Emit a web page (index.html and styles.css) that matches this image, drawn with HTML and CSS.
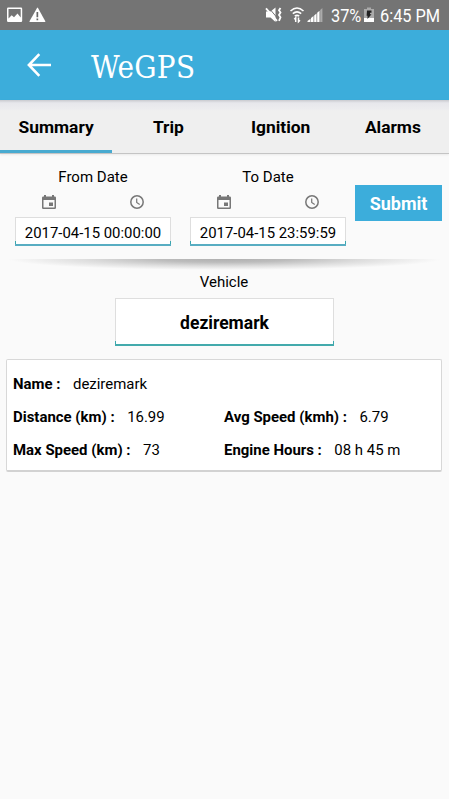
FILE: index.html
```html
<!DOCTYPE html>
<html lang="en">
<head>
<meta charset="utf-8">
<title>WeGPS</title>
<link rel="stylesheet" href="styles.css">
</head>
<body>
<div class="status">
  <svg class="notices" viewBox="0 0 46 30" aria-hidden="true">
    <path fill="#fff" fill-rule="evenodd" d="M2 7.500h12q1.200 0 1.200 1.200v12q0 1.300-1.200 1.300H1.200Q0 22 0 20.700V8.700Q0 7.500 1.200 7.500zM1.500 9v9.500l3.200-3.300 2.300 2 3.500-3.700 3.200 4V9z"/>
    <path fill="#fff" d="M30 8q.5-.8 1 0l7.300 13.200q.4.800-.5.800H23q-.9 0-.5-.8z"/>
    <path fill="#666" d="M29.500 12h1.700v5.300h-1.700zM29.500 18.600h1.700v1.700h-1.700z"/>
  </svg>
  <svg class="signals" viewBox="0 0 62 30" aria-hidden="true">
    <path fill="#fff" d="M1 11.500h4.500l5-4V22l-5-4.500H1z"/>
    <path fill="none" stroke="#747474" stroke-width="1" d="M3.500 7.500l8 9.500"/>
    <path fill="none" stroke="#fff" stroke-width="1.800" d="M1 8.300l11 12.500"/>
    <path fill="none" stroke="#fff" stroke-width="1.800" d="M15.500 8l-1.500 2.300 1.500 2.300-1.500 2.400 1.500 2.300-1.500 3.500"/>
    <g fill="none" stroke="#fff" stroke-width="1.600">
      <path d="M25.500 11q6.500-6 13 0M27.800 13.700q4.200-3.500 8.400 0M29.800 16.200q2.200-1.800 4.400 0"/>
      <path stroke-width="1.500" d="M30.700 22v-4.200l-1.500 1.500M33.500 17.500v4.200l1.500-1.500"/>
    </g>
    <path fill="#fff" d="M42.500 22v-1l3-2.200V22zM46 22v-4l2.500-2v6zM49.200 22v-6.500l2.300-2V22zM52.200 22v-9.200l2.300-2V22z"/>
    <path fill="#aaa" d="M55.200 22V10l2.200-2v14z"/>
  </svg>
  <span class="pct"><span>37%</span></span>
  <svg class="battery" viewBox="0 0 10 30" aria-hidden="true">
    <path fill="#aaa" d="M3 7.500h4V9h3v10H0V9h3z"/>
    <path fill="#fff" d="M0 18h10v4H0z"/>
    <path fill="#222" d="M3 10.500h4.500v2.200H6v1.500h1.500L3.500 19v-3.200H2.600z"/>
  </svg>
  <span class="time"><span>6:45 PM</span></span>
</div>
<header class="appbar">
  <svg class="back" viewBox="0 0 24 24" aria-hidden="true"><path fill="none" stroke="#fff" stroke-width="2.600" d="M12.300 1.200L1.900 12l10.400 10.800M2 12h22"/></svg>
  <h1>WeGPS</h1>
</header>
<nav class="tabs">
  <span class="tab active">Summary</span><span class="tab">Trip</span><span class="tab">Ignition</span><span class="tab">Alarms</span>
</nav>
<main>
  <section class="range">
    <div class="field">
      <label>From Date</label>
      <div class="pickers">
        <svg viewBox="0 0 14 16"><path fill="#777" fill-rule="evenodd" d="M2 1h2v1.500h6V1h2v1.500h.8q1.200 0 1.200 1.200v10q0 1.300-1.200 1.300H1.200Q0 15 0 13.700v-10Q0 2.500 1.200 2.500H2zM1.500 6v7.500h11V6zM7 8.500h4V12H7z"/></svg>
        <svg viewBox="0 0 14 16"><circle cx="7" cy="8" r="6.200" fill="none" stroke="#777" stroke-width="1.500"/><path fill="none" stroke="#777" stroke-width="1.200" d="M6.700 4.500v4l3 1.900"/></svg>
      </div>
      <div class="input date">2017-04-15 00:00:00</div>
    </div>
    <div class="field">
      <label>To Date</label>
      <div class="pickers">
        <svg viewBox="0 0 14 16"><path fill="#777" fill-rule="evenodd" d="M2 1h2v1.500h6V1h2v1.500h.8q1.200 0 1.200 1.200v10q0 1.300-1.200 1.300H1.200Q0 15 0 13.700v-10Q0 2.500 1.200 2.500H2zM1.500 6v7.500h11V6zM7 8.500h4V12H7z"/></svg>
        <svg viewBox="0 0 14 16"><circle cx="7" cy="8" r="6.200" fill="none" stroke="#777" stroke-width="1.500"/><path fill="none" stroke="#777" stroke-width="1.200" d="M6.700 4.500v4l3 1.900"/></svg>
      </div>
      <div class="input date">2017-04-15 23:59:59</div>
    </div>
    <button class="submit">Submit</button>
  </section>
  <div class="divider"></div>
  <section class="vehicle">
    <label>Vehicle</label>
    <div class="input select">deziremark</div>
  </section>
  <section class="card">
    <div class="wide"><b>Name :</b><span>deziremark</span></div>
    <div><b>Distance (km) :</b><span>16.99</span></div>
    <div><b>Avg Speed (kmh) :</b><span>6.79</span></div>
    <div><b>Max Speed (km) :</b><span>73</span></div>
    <div><b>Engine Hours :</b><span>08 h 45 m</span></div>
  </section>
</main>
</body>
</html>
```
FILE: styles.css
```css
* { box-sizing: border-box; }
body {
  margin: 0;
  height: 799px;
  overflow: hidden;
  background: #fafafa;
  color: #000;
  font: 15px/18px Roboto, sans-serif;
}
svg { display: block; flex: none; }
label { display: block; }
.status {
  display: flex;
  height: 30px;
  padding-left: 7px;
  background: #747474;
  color: #fff;
  font-size: 19px;
  line-height: 31px;
}
.notices { width: 46px; height: 30px; }
.signals { width: 62px; height: 30px; margin-left: 212px; }
.battery { width: 10px; height: 30px; }
.status span { white-space: nowrap; }
.status span span { display: inline-block; transform-origin: 0 50%; transform: scaleX(.86); }
.pct { width: 33px; margin-left: 4px; }
.time { width: 65px; margin-left: 6px; }
.appbar {
  display: flex;
  align-items: center;
  height: 70px;
  padding-left: 27px;
  background: #3caddb;
  color: #fff;
}
.back { width: 24px; height: 24px; margin-top: -1px; }
h1 {
  margin: 3px 0 0 40px;
  font: 400 31px/40px "DejaVu Serif Condensed", "DejaVu Serif", serif;
  letter-spacing: .3px;
}
.tabs {
  display: grid;
  grid-template-columns: repeat(4, 1fr);
  height: 54px;
  border-bottom: 1px solid #c4c4c4;
  background: linear-gradient(#c9cacf, #e7e7ec 3px, #ececef 9px, #efefef 11px);
  box-shadow: 0 1px 2px #0001;
}
.tab {
  height: 53px;
  font-weight: 700;
  font-size: 17.400px;
  line-height: 54px;
  text-align: center;
}
.active { border-bottom: 3px solid #48aad0; }
.range {
  display: flex;
  height: 105px;
  padding: 14px 7px 0 15px;
}
.field { width: 156px; margin-right: 19px; text-align: center; }
.field + .field { margin-right: 9px; }
.pickers {
  display: flex;
  justify-content: space-between;
  height: 31px;
  padding: 8px 27px 0 27px;
}
.pickers svg { width: 14px; height: 16px; }
.input {
  border-top: 1px solid #dedede;
  background:
    linear-gradient(#dedede calc(100% - 3px), #3aa6ae 0) 0 0 / 1px 100% no-repeat,
    linear-gradient(#dedede calc(100% - 3px), #3aa6ae 0) 100% 0 / 1px 100% no-repeat, #fff;
  text-align: center;
}
.date {
  height: 29px;
  border-bottom: 2px solid #58adc2;
  font-size: 14.900px;
  line-height: 30px;
}
.submit {
  width: 87px;
  height: 36px;
  margin: 17px 0 0;
  padding: 2px 0 0;
  border: 0;
  background: #3caddb;
  color: #fff;
  font: 700 18px/34px Roboto, sans-serif;
}
.divider {
  height: 12px;
  margin: 0 8px;
  background: radial-gradient(ellipse 50% 11px at 50% 0, #b0b0b0, #bcbcbc 30%, #dedede 65%, #fafafa);
}
.vehicle { width: 219px; margin: 2px auto 13px 115px; text-align: center; }
.vehicle label { margin-right: 1px; }
.select {
  height: 48px;
  margin-top: 7px;
  border-bottom: 2px solid #43aaac;
  font-weight: 700;
  font-size: 17.500px;
  line-height: 48px;
}
.card {
  display: grid;
  grid-template-columns: 211px 1fr;
  grid-auto-rows: 33px;
  height: 113px;
  margin: 0 7px 0 6px;
  padding: 7px 0 0 6px;
  border: 1px solid #d8d8d8;
  border-bottom: 2px solid #d2d2d2;
  border-radius: 2px;
  background: #fff;
  font-size: 14.950px;
  line-height: 34px;
}
.wide { grid-column: 1 / -1; }
.card span { margin-left: 12.500px; }
```
